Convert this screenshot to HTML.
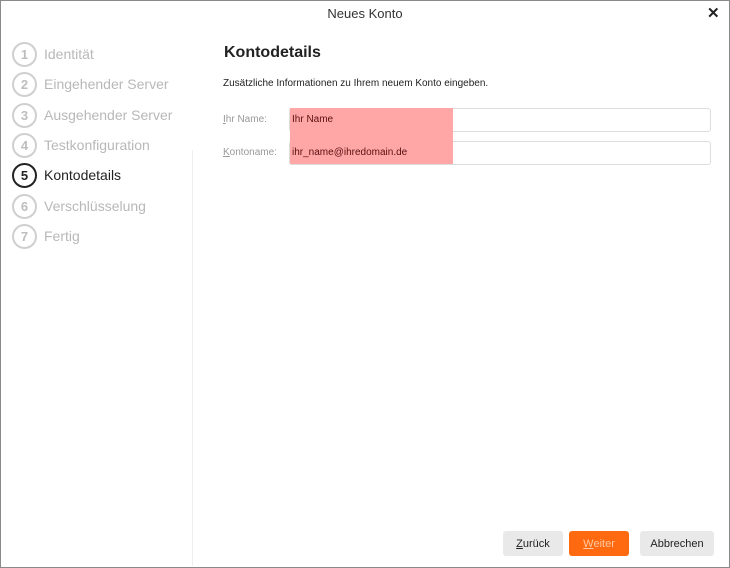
<!DOCTYPE html><html><head><style>
body{margin:0;width:730px;height:568px;overflow:hidden;background:#fff;font-family:"Liberation Sans",sans-serif;position:relative}
.win{position:absolute;left:0;top:0;width:728px;height:566px;border:1px solid #8a8a8a}
.a{position:absolute}
.step{position:absolute;left:12px;height:26px;display:flex;align-items:center;font-size:14px;color:#b8b8b8}
.c{width:21px;height:21px;border:2px solid #cfcfcf;border-radius:50%;display:flex;align-items:center;justify-content:center;font-size:13px;font-weight:bold;color:#bdbdbd;margin-right:7px}
.act{color:#222}.act .c{border-color:#222;color:#222}
.inp{position:absolute;left:289px;width:420px;height:22px;border:1px solid #ddd;border-radius:3px;background:#fff}
.lbl{position:absolute;left:223px;font-size:10px;color:#999}
.btn{position:absolute;top:531px;height:25px;border-radius:3px;font-size:11px;display:flex;align-items:center;justify-content:center}
</style></head><body><div class="win"></div>
<div class="a" style="left:0;top:6px;width:730px;text-align:center;font-size:13px;color:#333">Neues Konto</div>
<div class="a" style="left:707px;top:4px;font-size:15px;font-weight:bold;color:#222">✕</div>
<div class="a" style="left:192px;top:150px;width:1px;height:416px;background:#eee"></div>
<div class="step" style="top:41px"><div class="c">1</div>Identität</div>
<div class="step" style="top:71px"><div class="c">2</div>Eingehender Server</div>
<div class="step" style="top:102px"><div class="c">3</div>Ausgehender Server</div>
<div class="step" style="top:132px"><div class="c">4</div>Testkonfiguration</div>
<div class="step act" style="top:162px"><div class="c">5</div>Kontodetails</div>
<div class="step" style="top:193px"><div class="c">6</div>Verschlüsselung</div>
<div class="step" style="top:223px"><div class="c">7</div>Fertig</div>
<div class="a" style="left:224px;top:44px;font-size:16px;font-weight:bold;color:#222">Kontodetails</div>
<div class="a" style="left:223px;top:78px;font-size:10px;color:#222">Zusätzliche Informationen zu Ihrem neuem Konto eingeben.</div>
<div class="lbl" style="top:114px"><u>I</u>hr Name:</div>
<div class="lbl" style="top:147px"><u>K</u>ontoname:</div>
<div class="inp" style="top:108px"></div>
<div class="inp" style="top:141px"></div>
<div class="a" style="left:290px;top:108px;width:163px;height:56px;background:#ffa6a6"></div>
<div class="a" style="left:292px;top:114px;font-size:10px;color:#5a1010">Ihr Name</div>
<div class="a" style="left:292px;top:147px;font-size:10px;color:#5a1010">ihr_name@ihredomain.de</div>
<div class="btn" style="left:503px;width:60px;background:#e9e9e9;color:#222"><u>Z</u>urück</div>
<div class="btn" style="left:569px;width:60px;background:#ff6a10;color:#ffc8a0"><u>W</u>eiter</div>
<div class="btn" style="left:640px;width:74px;background:#e9e9e9;color:#222">Abbrechen</div>
</body></html>
